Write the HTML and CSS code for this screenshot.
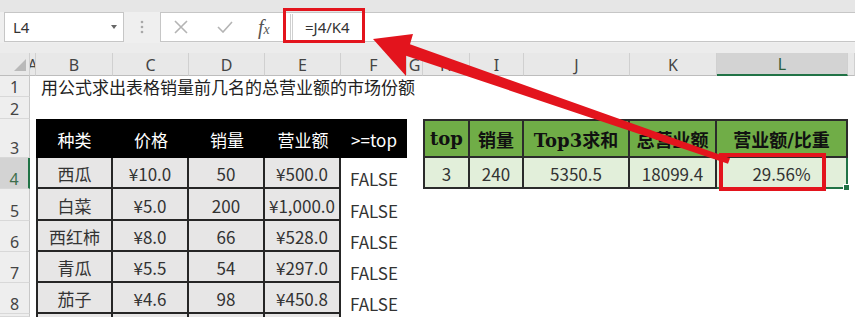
FILE: index.html
```html
<!DOCTYPE html>
<html lang="zh-CN">
<head>
    <meta charset="UTF-8">
    <title>营业额比重</title>
    <link rel="stylesheet" href="styles.css">
</head>
<body>
    <div class="ribbon"></div>

    <!-- Formula bar -->
    <div class="formula-bar">
        <div class="name-box"><span>L4</span><span class="caret"></span></div>
        <div class="grip">
            <svg width="4" height="14" viewBox="0 0 4 14"><circle cx="2" cy="2" r="1.3"/><circle cx="2" cy="7" r="1.3"/><circle cx="2" cy="12" r="1.3"/></svg>
        </div>
        <div class="fx-box">
            <svg class="cancel" width="14" height="14" viewBox="0 0 14 14"><path d="M1 1L13 13M13 1L1 13"/></svg>
            <svg class="enter" width="16" height="12" viewBox="0 0 16 12"><path d="M1 6L6 11L15 1"/></svg>
            <span class="fx"><i>f</i><i class="sub">x</i></span>
        </div>
        <div class="formula-input"><span class="splitter"></span><span class="formula">=J4/K4</span></div>
    </div>
    <div class="gap"></div>

    <!-- Worksheet -->
    <div class="sheet">
        <div class="ch corner"><span class="corner-tri"></span></div>
        <div class="ch">A</div>
        <div class="ch">B</div>
        <div class="ch">C</div>
        <div class="ch">D</div>
        <div class="ch">E</div>
        <div class="ch">F</div>
        <div class="ch">G</div>
        <div class="ch">H</div>
        <div class="ch">I</div>
        <div class="ch">J</div>
        <div class="ch">K</div>
        <div class="ch sel">L</div>
        <div class="ch"></div>

        <div class="rh">1</div><div></div>
        <div class="title">用公式求出表格销量前几名的总营业额的市场份额</div>

        <div class="rh">2</div><div class="span13"></div>

        <div class="rh">3</div><div></div>
        <div class="th">种类</div>
        <div class="th">价格</div>
        <div class="th">销量</div>
        <div class="th">营业额</div>
        <div class="th">&gt;=top</div>
        <div></div>
        <div class="gh first">top</div>
        <div class="gh">销量</div>
        <div class="gh">Top3求和</div>
        <div class="gh">总营业额</div>
        <div class="gh">营业额/比重</div>
        <div></div>

        <div class="rh sel">4</div><div></div>
        <div class="td first">西瓜</div>
        <div class="td">¥10.0</div>
        <div class="td">50</div>
        <div class="td">¥500.0</div>
        <div class="flag">FALSE</div>
        <div></div>
        <div class="gd first">3</div>
        <div class="gd">240</div>
        <div class="gd">5350.5</div>
        <div class="gd">18099.4</div>
        <div class="gd active">29.56%</div>
        <div></div>

        <div class="rh">5</div><div></div>
        <div class="td first">白菜</div>
        <div class="td">¥5.0</div>
        <div class="td">200</div>
        <div class="td">¥1,000.0</div>
        <div class="flag">FALSE</div>
        <div class="span7"></div>

        <div class="rh">6</div><div></div>
        <div class="td first">西红柿</div>
        <div class="td">¥8.0</div>
        <div class="td">66</div>
        <div class="td">¥528.0</div>
        <div class="flag">FALSE</div>
        <div class="span7"></div>

        <div class="rh">7</div><div></div>
        <div class="td first">青瓜</div>
        <div class="td">¥5.5</div>
        <div class="td">54</div>
        <div class="td">¥297.0</div>
        <div class="flag">FALSE</div>
        <div class="span7"></div>

        <div class="rh">8</div><div></div>
        <div class="td first">茄子</div>
        <div class="td">¥4.6</div>
        <div class="td">98</div>
        <div class="td">¥450.8</div>
        <div class="flag">FALSE</div>
        <div class="span7"></div>

        <div class="rh"></div><div></div>
        <div class="td first"></div>
        <div class="td"></div>
        <div class="td"></div>
        <div class="td"></div>
        <div class="span8"></div>
    </div>

    <!-- Red annotations drawn over the sheet -->
    <svg class="marks" width="855" height="317" viewBox="0 0 855 317">
        <rect x="284.5" y="9.5" width="79" height="32"/>
        <rect x="721" y="155" width="103" height="34" class="thick"/>
        <polygon points="373,39 413,34 410,44.3 730,158.2 728,163.8 406,55.7 406,76"/>
    </svg>
</body>
</html>
```

FILE: styles.css
```css
body {
    margin: 0;
    width: 855px;
    height: 317px;
    overflow: hidden;
    position: relative;
    background: #fff;
    color: #333;
    font-family: "Noto Sans CJK SC", "Noto Sans", sans-serif;
}
.ribbon {
    height: 12px;
    background: #e6e6e6;
}
.formula-bar {
    display: flex;
    align-items: flex-start;
    height: 31px;
    padding-left: 4px;
    background: #efefef;
    font-family: "Noto Sans", sans-serif;
    font-size: 15px;
}
.name-box {
    width: 120px;
    height: 30px;
    box-sizing: border-box;
    display: flex;
    align-items: center;
    justify-content: space-between;
    padding: 0 6px 0 8px;
    background: #fff;
    border: 1px solid #c6c6c6;
    color: #333;
}
.caret {
    border-left: 3.5px solid transparent;
    border-right: 3.5px solid transparent;
    border-top: 4px solid #666;
}
.grip {
    width: 36px;
    height: 30px;
    display: flex;
    align-items: center;
    justify-content: center;
}
.grip circle {
    fill: #a8a8a8;
}
.fx-box {
    width: 123px;
    height: 30px;
    box-sizing: border-box;
    display: flex;
    align-items: center;
    padding-left: 13px;
    background: #fff;
    border: 1px solid #c6c6c6;
    border-right: none;
}
.fx-box path {
    fill: none;
    stroke: #b4b4b4;
    stroke-width: 1.6;
}
.enter {
    margin-left: 29px;
}
.fx {
    margin-left: 25px;
    font-family: "Liberation Serif", serif;
    color: #555;
}
.fx i {
    font-size: 20px;
}
.fx .sub {
    font-size: 14px;
}
.formula-input {
    flex: 1;
    height: 30px;
    box-sizing: border-box;
    display: flex;
    align-items: center;
    padding-left: 6px;
    background: #fff;
    border: 1px solid #c6c6c6;
    border-right: none;
}
.splitter {
    width: 1px;
    height: 26px;
    border-left: 1px solid #cfcfcf;
    border-right: 1px solid #cfcfcf;
}
.formula {
    margin-left: 12px;
    color: #333;
}
.gap {
    height: 10px;
    background: #ececec;
}

/* grid of the worksheet */
.sheet {
    display: grid;
    grid-template-columns: 30px 6px 77px 76px 76px 76px 66px 16px 47px 54px 106px 87px 131px 7px;
    grid-template-rows: 23px 21px 22px 39px 31px 32px 31px 31px 31px 3px;
}
.sheet > div {
    box-sizing: border-box;
    display: flex;
    align-items: center;
    justify-content: center;
    min-width: 0;
    overflow: hidden;
    white-space: nowrap;
}
.ch {
    padding-top: 2px;
    background: #e8e8e8;
    border-right: 1px solid #d0d0d0;
    border-bottom: 1px solid #bdbdbd;
    font-family: "Noto Sans", sans-serif;
    font-size: 16px;
    line-height: 19px;
    color: #444;
}
.ch.sel {
    background: #d3d3d3;
    border-bottom: 2px solid #217346;
    color: #2d5e3c;
}
.sheet > .corner {
    align-items: flex-end;
    justify-content: flex-end;
    padding: 0 3px 4px 0;
}
.corner-tri {
    border-left: 12px solid transparent;
    border-bottom: 12px solid #b9b9b9;
}
.sheet > .rh {
    align-items: flex-end;
    background: #eeeeee;
    border-right: 1px solid #c8c8c8;
    border-bottom: 1px solid #d8d8d8;
    font-family: "Noto Sans", sans-serif;
    font-size: 16px;
    line-height: 18px;
    color: #444;
}
.sheet > .rh.sel {
    background: #d3d3d3;
    border-right: 2px solid #217346;
    color: #3d6e4b;
}
.sheet > .title {
    grid-column: span 12;
    justify-content: flex-start;
    padding-left: 5px;
    overflow: visible;
    font-size: 17px;
    line-height: 21px;
    color: #222;
}
.span13 {
    grid-column: span 13;
}
.span7 {
    grid-column: span 7;
}
.span8 {
    grid-column: span 8;
}

/* left table */
.th {
    padding-top: 2px;
    background: #000;
    color: #fff;
    font-size: 17px;
}
.td {
    padding-top: 3px;
    background: #e7e6e6;
    border-right: 2px solid #262626;
    border-bottom: 2px solid #262626;
    font-size: 17px;
    line-height: 22px;
    color: #333;
}
.td.first {
    border-left: 2px solid #262626;
}
.sheet > .flag {
    align-items: flex-end;
    overflow: visible;
    font-size: 17px;
    line-height: 20px;
    color: #333;
}

/* right table */
.gh {
    background: #70ad47;
    border-top: 2px solid #2b2b2b;
    border-right: 2px solid #2b2b2b;
    border-bottom: 2px solid #2b2b2b;
    font-family: "DejaVu Serif", "Noto Sans CJK SC", serif;
    font-weight: bold;
    font-size: 18px;
    color: #111;
}
.gd {
    padding-top: 3px;
    background: #e2efda;
    border-right: 2px solid #2b2b2b;
    border-bottom: 2px solid #2b2b2b;
    font-size: 17px;
    line-height: 22px;
    color: #333;
}
.gh.first,
.gd.first {
    border-left: 2px solid #2b2b2b;
}
.sheet > .gd.active {
    position: relative;
    overflow: visible;
    border-right-color: #217346;
    border-bottom-color: #217346;
}
.gd.active::after {
    content: "";
    position: absolute;
    right: -4px;
    bottom: -4px;
    width: 5px;
    height: 5px;
    background: #217346;
    border: 1px solid #fff;
}

/* annotations */
.marks {
    position: absolute;
    top: 0;
    left: 0;
    pointer-events: none;
}
.marks rect {
    fill: none;
    stroke: #e3141d;
    stroke-width: 3;
}
.marks rect.thick {
    stroke-width: 4;
}
.marks polygon {
    fill: #e3141d;
}
```
